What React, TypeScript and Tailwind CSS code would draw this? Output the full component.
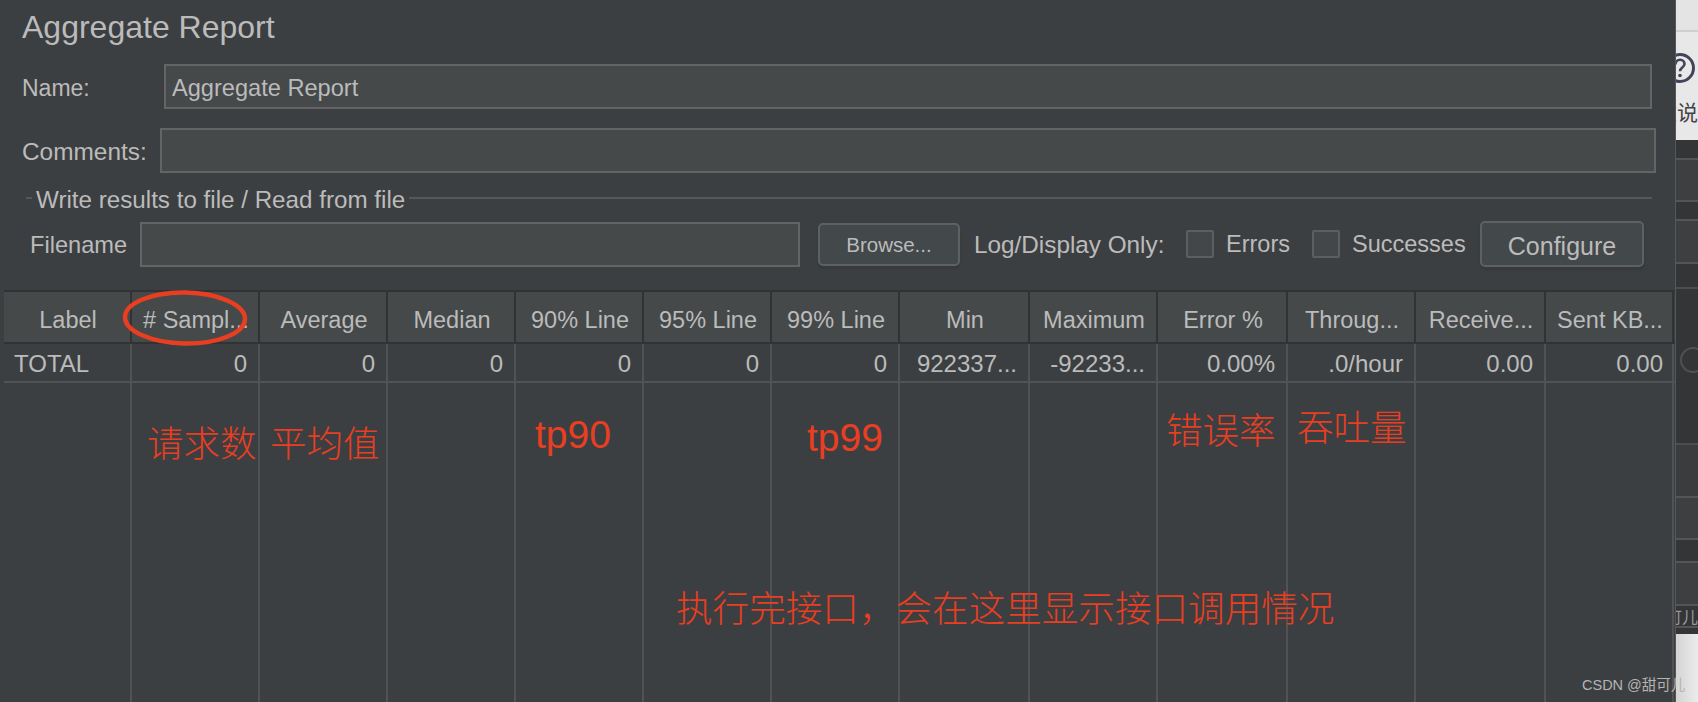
import React from "react";

const columns = [
  { label: "Label", value: "TOTAL", left: true },
  { label: "# Sampl...", value: "0" },
  { label: "Average", value: "0" },
  { label: "Median", value: "0" },
  { label: "90% Line", value: "0" },
  { label: "95% Line", value: "0" },
  { label: "99% Line", value: "0" },
  { label: "Min", value: "922337..." },
  { label: "Maximum", value: "-92233..." },
  { label: "Error %", value: "0.00%" },
  { label: "Throug...", value: ".0/hour" },
  { label: "Receive...", value: "0.00" },
  { label: "Sent KB...", value: "0.00", tight: true },
];

const gridCols =
  "grid grid-cols-[128px_128px_128px_128px_128px_128px_128px_130px_128px_130px_128px_130px_128px]";

// Red notes pasted over the table
const notes = [
  { text: "请求数", className: "left-[147px] top-[425px] text-[36.500px]" },
  { text: "平均值", className: "left-[270px] top-[425px] text-[36.500px]" },
  { text: "tp90", className: "left-[535px] top-[415px] text-[39px]" },
  { text: "tp99", className: "left-[807px] top-[418px] text-[39px]" },
  { text: "错误率", className: "left-[1166px] top-[412px] text-[36.500px]" },
  { text: "吞吐量", className: "left-[1297px] top-[409px] text-[36.500px]" },
  { text: "执行完接口，会在这里显示接口调用情况", className: "left-[676px] top-[590px] text-[36.600px]" },
];

function Field({ className }: { className: string }) {
  return <div className={`h-[45px] border-2 border-[#646464] bg-[#45494a] ${className}`} />;
}

function Check({ label, className }: { label: string; className: string }) {
  return (
    <div className={`flex items-center ${className}`}>
      <div className="h-[28px] w-[28px] rounded-[2px] border-2 border-[#5c5f60] bg-[#43474a]" />
      <span className="ml-[12px] pt-[2px] text-[23.500px]">{label}</span>
    </div>
  );
}

function Side() {
  return (
    <div className="flex h-full w-[22px] flex-col overflow-hidden bg-[#333537]">
      <div className="h-[32px] shrink-0 border-b-2 border-[#cfcfcf] bg-[#e4e4e4]" />
      <div className="flex h-[108px] shrink-0 flex-col bg-[#e8e8e8] pt-[20px]">
        <svg width="32" height="32" viewBox="0 0 32 32" className="-ml-[12px] shrink-0" fill="none">
          <circle cx="16" cy="16" r="13.5" stroke="#42455a" strokeWidth="3" />
          <path d="M11.5 12.5c0-3 2-4.800 4.500-4.800s4.500 1.800 4.500 4.300c0 3.500-4.500 3.700-4.500 7.200" stroke="#42455a" strokeWidth="2.600" />
          <circle cx="16" cy="23.500" r="1.800" fill="#42455a" />
        </svg>
        <div className="mt-[14px] flex justify-end whitespace-nowrap text-[21px] leading-[26px] text-[#444] [font-family:'Noto_Sans_CJK_SC',sans-serif]">款说</div>
      </div>
      <div className="h-[20px] shrink-0 border-b-2 border-[#555]" />
      <div className="h-[42px] shrink-0 border-b-2 border-[#555] bg-[#3d3f41]" />
      <div className="h-[19px] shrink-0 border-b-2 border-[#555]" />
      <div className="h-[43px] shrink-0 border-b-2 border-[#555] bg-[#3d3f41]" />
      <div className="h-[25px] shrink-0 border-b-2 border-[#4c4e50]" />
      <div className="h-[156px] shrink-0 border-b-2 border-[#4c4e50] pl-[4px] pt-[58px]">
        <div className="h-[26px] w-[26px] rounded-full border-2 border-[#4e5052]" />
      </div>
      <div className="h-[53px] shrink-0 border-b-2 border-[#555] bg-[#3a3c3e]" />
      <div className="h-[42px] shrink-0 border-b-2 border-[#555] bg-[#3d3f41]" />
      <div className="h-[23px] shrink-0 border-b-2 border-[#555]" />
      <div className="h-[43px] shrink-0 border-b-2 border-[#555] bg-[#3d3f41]" />
      <div className="flex h-[22px] shrink-0 items-center justify-end border-b-2 border-[#555] whitespace-nowrap text-[16px] text-[#999] [font-family:'Noto_Sans_CJK_SC',sans-serif]">可儿</div>
      <div className="h-[6px] shrink-0" />
      <div className="flex-1 bg-gradient-to-r from-[#d4d4d4] to-[#ececec]" />
    </div>
  );
}

export default function App() {
  return (
    <div className="relative flex h-[702px] w-[1698px] overflow-hidden bg-[#3c3f41] text-[#bbbbbb] [font-family:'Liberation_Sans',sans-serif]">
      <div className="flex h-full w-[1676px] shrink-0 flex-col border-r border-r-[#555759]">
        {/* Title and form */}
        <div className="flex h-[54px] shrink-0 items-center pl-[22px] text-[32px] leading-none">Aggregate Report</div>
        <div className="mt-[10px] flex h-[45px] shrink-0 items-center pl-[22px] pr-[23px] text-[23.600px]">
          <span className="w-[142px] pt-[4px] text-[23px]">Name:</span>
          <div className="flex h-[45px] flex-1 items-center border-2 border-[#646464] bg-[#45494a] pl-[6px] pt-[4px]">Aggregate Report</div>
        </div>
        <div className="mt-[19px] flex h-[45px] shrink-0 items-center pl-[22px] pr-[19px] text-[24.400px]">
          <span className="w-[138px] pt-[4px]">Comments:</span>
          <Field className="flex-1" />
        </div>

        {/* Write results to file group */}
        <div className="mt-[12px] flex h-[26px] shrink-0 items-center pl-[26px] pr-[23px] text-[24.200px]">
          <div className="h-[2px] w-[6px] bg-[#555759]" />
          <span className="mx-[4px] whitespace-nowrap pt-[4px]">Write results to file / Read from file</span>
          <div className="h-[2px] flex-1 bg-[#555759]" />
        </div>
        <div className="mt-[10px] flex h-[46px] shrink-0 items-center pl-[30px] text-[23.600px]">
          <span className="w-[110px] pt-[3px]">Filename</span>
          <Field className="w-[660px]" />
          <button className="ml-[18px] flex h-[43px] w-[142px] items-center justify-center rounded-[5px] border-2 border-[#5e6162] bg-[#43484a] pt-[2px] text-[20.500px] text-[#bbbbbb] shadow-[0_3px_2px_#37393b]">
            Browse...
          </button>
          <span className="ml-[14px] w-[212px] whitespace-nowrap pt-[2px] text-[24.300px]">Log/Display Only:</span>
          <Check label="Errors" className="w-[126px]" />
          <Check label="Successes" className="w-[168px]" />
          <button className="flex h-[46px] w-[164px] items-center justify-center rounded-[5px] border-2 border-[#5e6162] bg-[#43484a] pt-[5px] text-[25px] text-[#bbbbbb] shadow-[0_3px_2px_#37393b]">
            Configure
          </button>
        </div>

        {/* Results table */}
        <div className="mt-[23px] flex min-h-0 flex-1 flex-col pl-[4px]">
          <div className={`${gridCols} h-[54px] shrink-0 border-y-2 border-[#303234]`}>
            {columns.map((c) => (
              <div key={c.label} className="flex items-center justify-center overflow-hidden whitespace-nowrap border-r-2 border-[#303234] bg-[#45494a] pl-[2px] pt-[8px] text-[23.500px]">
                {c.label}
              </div>
            ))}
          </div>
          <div className={`${gridCols} h-[39px] shrink-0 border-b-2 border-[#505254]`}>
            {columns.map((c) => (
              <div key={c.label} className={`flex items-center overflow-hidden whitespace-nowrap border-r-2 border-[#505254] pt-[2px] text-[24px] ${c.left ? "justify-start pl-[10px]" : c.tight ? "justify-end pr-[9px]" : "justify-end pr-[11px]"}`}>
                {c.value}
              </div>
            ))}
          </div>
          <div className={`${gridCols} min-h-0 flex-1`}>
            {columns.map((c) => (
              <div key={c.label} className="border-r-2 border-[#505254]" />
            ))}
          </div>
        </div>
      </div>

      <Side />

      {/* Annotations */}
      <svg width="130" height="60" viewBox="0 0 130 60" fill="none" className="absolute left-[120px] top-[289px]">
        <ellipse cx="65" cy="29" rx="60" ry="25.500" stroke="#e83e21" strokeWidth="4.500" transform="rotate(1 65 29)" />
      </svg>
      {notes.map((n) => (
        <span key={n.text} className={`absolute whitespace-nowrap font-light leading-[40px] text-[#e83e21] [font-family:'Liberation_Sans','Noto_Sans_CJK_SC',sans-serif] ${n.className}`}>
          {n.text}
        </span>
      ))}
      <span className="absolute left-[1582px] top-[675px] whitespace-nowrap text-[14.500px] leading-[20px] text-[#b4b4b4] [font-family:'Liberation_Sans','Noto_Sans_CJK_SC',sans-serif]">
        CSDN @甜可儿
      </span>
    </div>
  );
}
